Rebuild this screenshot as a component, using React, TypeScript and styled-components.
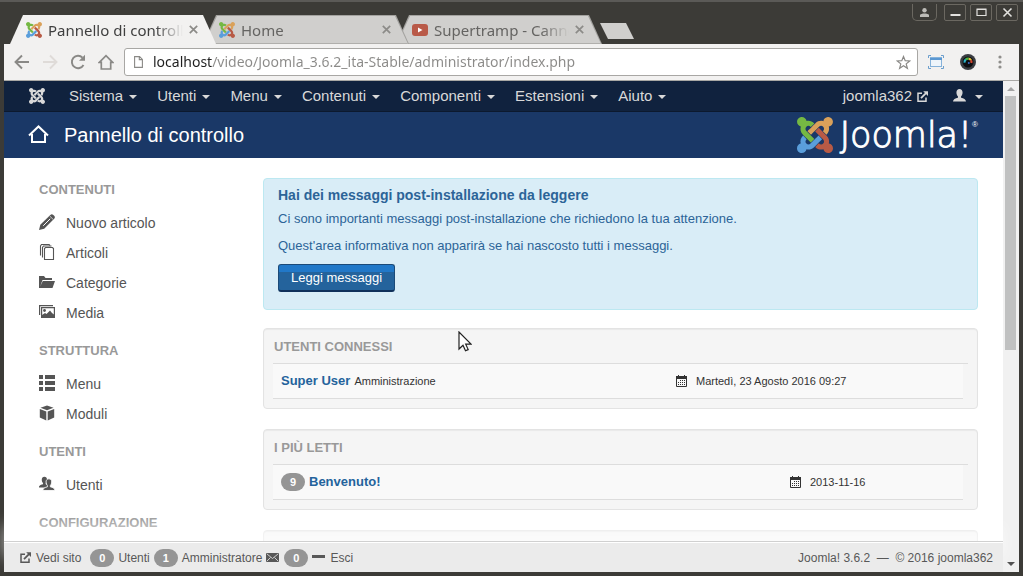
import React from "react";
import styled, { createGlobalStyle, css } from "styled-components";

const Global = createGlobalStyle`
  *, *::before, *::after { box-sizing: border-box; }
  body { margin: 0; background: #3c3b37; }
  button, input { font: inherit; margin: 0; padding: 0; border: 0; background: none; color: inherit; }
  a { color: inherit; text-decoration: none; }
  h1, h2, h3, h4, p, ul { margin: 0; padding: 0; }
  ul { list-style: none; }
  svg { display: block; flex: none; }
`;

/* ---------- browser window ---------- */

const Window = styled.div`
  position: relative;
  display: flex;
  flex-direction: column;
  height: 100vh;
  padding: 0 4px 4px;
  background: #3c3b37;
  border-top: 2px solid #5b5a57;
  overflow: hidden;
  font-family: "Liberation Sans", Arial, sans-serif;
`;

const TabStrip = styled.div`
  display: flex;
  justify-content: space-between;
  height: 42px;
  flex: none;
  padding-left: 6px;
`;

const Tabs = styled.div`
  display: flex;
  align-items: flex-end;
`;

const slope = "polygon(13px 0, calc(100% - 13px) 0, 100% 100%, 0 100%)";
const innerSlope =
  "polygon(14px 1px, calc(100% - 14px) 1px, calc(100% - 1px) 100%, 1px 100%)";

const Tab = styled.div<{ $active?: boolean; $level: number }>`
  position: relative;
  z-index: ${(p) => p.$level};
  display: flex;
  align-items: center;
  gap: 6px;
  width: 206px;
  height: 29px;
  margin-right: -13px;
  padding: 0 18px 0 16px;
  color: ${(p) => (p.$active ? "#3f3f3f" : "#656462")};
  isolation: isolate;
  &::before,
  &::after {
    content: "";
    position: absolute;
    inset: 0;
    z-index: -1;
  }
  &::before {
    clip-path: ${slope};
    background: ${(p) => (p.$active ? "#f2f1f0" : "#a3a29f")};
  }
  &::after {
    clip-path: ${innerSlope};
    background: ${(p) => (p.$active ? "#f2f1f0" : "#d0cfcd")};
    ${(p) => !p.$active && css`border-bottom: 1px solid #b0afac;`}
  }
`;

const TabTitle = styled.span`
  flex: 1;
  min-width: 0;
  overflow: hidden;
  white-space: nowrap;
  font: 15px/20px "Noto Sans", "Open Sans", sans-serif;
  mask-image: linear-gradient(90deg, #000 calc(100% - 28px), transparent);
`;

const IconButton = styled.button`
  display: flex;
  align-items: center;
  justify-content: center;
  flex: none;
`;

const NewTab = styled.button`
  width: 34px;
  height: 16px;
  margin: 0 0 5px 11px;
  background: #d0cfcd;
  clip-path: polygon(0 0, 26px 0, 100% 100%, 8px 100%);
`;

const WindowControls = styled.div`
  display: flex;
  align-items: flex-start;
  gap: 4px;
  padding: 2px 1px 0 0;
`;

const WindowButton = styled(IconButton)<{ $profile?: boolean }>`
  width: 22px;
  height: 17px;
  border: 1px solid #6b6861;
  border-radius: 2px;
  ${(p) =>
    p.$profile &&
    css`
      width: 25px;
      border-top: 0;
      border-radius: 0 0 5px 5px;
      margin-right: 3px;
    `}
`;

const Toolbar = styled.div`
  display: flex;
  align-items: center;
  gap: 12px;
  height: 37px;
  flex: none;
  padding: 0 11px 0 10px;
  background: #f2f1f0;
  border-bottom: 1px solid #a9a8a5;
`;

const ToolGroup = styled.div`
  display: flex;
  gap: 12px;
`;

const Omnibox = styled.label`
  display: flex;
  align-items: center;
  gap: 10px;
  flex: 1;
  height: 28px;
  margin: 0 -2px;
  padding: 0 6px 0 9px;
  background: #fff;
  border: 1px solid #a8a7a4;
  border-radius: 3px;
`;

const Address = styled.input`
  flex: 1;
  min-width: 0;
  outline: 0;
  font: 14px/20px "Noto Sans", "Open Sans", sans-serif;
  color: #8b8a88;
  background: linear-gradient(90deg, #1f1f1f 59px, #8b8a88 59px);
  background-clip: text;
  -webkit-background-clip: text;
  -webkit-text-fill-color: transparent;
`;

const Extensions = styled.div`
  display: flex;
  align-items: center;
  gap: 16px;
`;

const Viewport = styled.div`
  display: flex;
  flex: 1;
  min-height: 0;
  background: #fff;
`;

const Page = styled.div`
  display: flex;
  flex-direction: column;
  flex: 1;
  min-width: 0;
`;

const Scrollbar = styled.div`
  display: flex;
  flex-direction: column;
  align-items: center;
  width: 16px;
  padding: 6px 1px 6px 0;
  background: #f1f1f1;
`;

const ScrollTrack = styled.div`
  flex: 1;
  width: 11px;
  margin: 5px 0;
`;

const ScrollThumb = styled.div`
  height: 55%;
  background: #c0c1c1;
`;

/* ---------- Joomla page ---------- */

const NavBar = styled.nav`
  display: flex;
  align-items: center;
  height: 31px;
  flex: none;
  padding: 0 20px 0 25px;
  background: #10223e;
  border-bottom: 1px solid #0c192e;
  color: #d9d9d9;
  font-size: 15px;
  line-height: 20px;
`;

const Menus = styled.div`
  display: flex;
  gap: 20px;
  flex: 1;
  margin-left: 24px;
`;

const MenuButton = styled.button`
  display: flex;
  align-items: center;
  gap: 6px;
  &::after {
    content: "";
    margin-top: 2px;
    border: 4px solid transparent;
    border-top-color: #d9d9d9;
    border-bottom: 0;
  }
`;

const UserMenu = styled(MenuButton)`
  gap: 9px;
`;

const SiteLink = styled.a`
  display: flex;
  align-items: center;
  gap: 5px;
  margin-right: 25px;
`;

const Header = styled.header`
  display: flex;
  align-items: center;
  gap: 15px;
  height: 46px;
  flex: none;
  padding: 0 25px 0 24px;
  background: #1a3867;
  color: #fff;
`;

const PageTitle = styled.h1`
  flex: 1;
  font-size: 20px;
  line-height: 24px;
  font-weight: 400;
`;

const Brand = styled.div`
  display: flex;
  align-items: center;
  gap: 7px;
`;

const BrandName = styled.span`
  display: flex;
  align-items: flex-start;
  font: 200 35px/36px "DejaVu Sans", sans-serif;
  -webkit-text-stroke: 1px #fff;
`;

const Registered = styled.span`
  font: 8px/16px "Liberation Sans", sans-serif;
  -webkit-text-stroke: 0;
`;

const Content = styled.div`
  display: flex;
  flex: 1;
  min-height: 0;
  overflow: hidden;
  padding: 0 25px 0 35px;
`;

const Sidebar = styled.aside`
  width: 224px;
  flex: none;
  padding-top: 9px;
`;

const GroupTitle = styled.h2`
  padding: 13px 0 8px;
  color: #999;
  font-size: 13px;
  line-height: 20px;
  text-transform: uppercase;
`;

const SideLink = styled.a`
  display: flex;
  align-items: center;
  gap: 11px;
  height: 30px;
  color: #555;
  font-size: 14px;
`;

const Main = styled.main`
  flex: 1;
  min-width: 0;
  padding-top: 20px;
`;

const Alert = styled.section`
  height: 132px;
  margin-bottom: 18px;
  padding: 6px 14px;
  background: #d9edf7;
  border: 1px solid #bce8f1;
  border-radius: 4px;
  color: #2c6498;
  font-size: 13px;
`;

const AlertTitle = styled.h2`
  margin-bottom: 5px;
  font-size: 14px;
  line-height: 20px;
`;

const AlertText = styled.p`
  margin-bottom: 9px;
  line-height: 18px;
`;

const PrimaryButton = styled.button`
  height: 28px;
  padding: 0 12px;
  color: #fff;
  font-size: 13px;
  line-height: 24px;
  background: linear-gradient(#2178c8 7px, #24639c 7px);
  border: 1px solid #1b4a78;
  border-bottom: 2px solid #10305a;
  border-radius: 3px;
`;

const Card = styled.section`
  height: 81px;
  margin-bottom: 20px;
  padding: 8px 9px;
  background: #f5f5f5;
  border: 1px solid #e3e3e3;
  border-radius: 4px;
  box-shadow: inset 0 1px 1px rgba(0, 0, 0, 0.05);
`;

const CardTitle = styled.h2`
  padding: 0 1px 6px;
  color: #999;
  border-bottom: 1px solid #ddd;
  font-size: 13px;
  line-height: 20px;
  text-transform: uppercase;
`;

const Row = styled.div<{ $columns: string }>`
  display: grid;
  grid-template-columns: ${(p) => p.$columns};
  align-items: center;
  height: 35px;
  margin-right: 5px;
  padding: 0 8px;
  background: #f9f9f9;
  border-bottom: 1px solid #ddd;
  color: #333;
  font-size: 11px;
`;

const RowMain = styled.div`
  display: flex;
  align-items: baseline;
  gap: 4px;
`;

const RowLink = styled.a`
  color: #24639c;
  font-size: 13px;
  line-height: 18px;
  font-weight: 700;
`;

const RowDate = styled.div`
  display: flex;
  align-items: center;
  gap: 9px;
`;

const Badge = styled.span`
  min-width: 24px;
  height: 18px;
  padding: 0 8px;
  border-radius: 9px;
  background: #959595;
  color: #fff;
  font-size: 11px;
  line-height: 18px;
  font-weight: 700;
  text-align: center;
`;

const StatusBar = styled.footer`
  position: relative;
  display: flex;
  align-items: center;
  gap: 4px;
  height: 31px;
  flex: none;
  padding: 1px 10px 0 16px;
  background: #ebebeb;
  border-top: 1px solid #d0d0d0;
  box-shadow: inset 0 1px 0 #fff, 0 -15px 15px rgba(255, 255, 255, 0.6);
  color: #585858;
  font-size: 12px;
`;

const StatusLink = styled.a<{ $wide?: boolean }>`
  display: flex;
  align-items: center;
  gap: 5px;
  margin-right: ${(p) => (p.$wide ? "5px" : "0")};
`;

const Copyright = styled.p`
  margin-left: auto;
  white-space: pre;
`;

const Pointer = styled.svg`
  position: absolute;
  left: 458px;
  top: 329px;
`;

/* ---------- drawings ---------- */

const knot = [
  "M.6 92.1C.6 58.8 27.4 32 60.4 32c30 0 54.5 21.9 59.2 50.2 32.6-7.6 67.1.6 96.5 30l-44.3 44.3c-20.5-20.5-42.6-16.3-55.4-3.5-14.3 14.3-14.3 37.9 0 52.2l99.5 99.5-44 44.3c-87.7-87.2-49.7-49.7-99.8-99.7-26.8-26.5-35-64.8-24.8-98.9C20.4 144.6.6 120.7.6 92.1z",
  "M130.1 208.5l44.3 44.3c10-10 89.7-89.7 99.7-99.8 14.3-14.3 37.6-14.3 51.9 0 12.8 12.8 17 35-3.5 55.4l44 44.3c31.2-31.2 38.5-67.6 28.9-101.2 29.2-4.1 51.9-29.2 51.9-59.5 0-33.2-26.8-60.1-59.8-60.1-30.3 0-55.4 22.5-59.5 51.6-33.8-9.9-71.7-1.5-98.3 25.1-18.3 19.1-71.1 71.5-99.6 99.9z",
  "M396.4 360.7c8.2-32.7-.9-68.5-26.3-93.9-11.8-12.2 5 4.7-99.5-99.7l-44.3 44.3 99.7 99.7c14.3 14.3 14.3 37.6 0 51.9-12.8 12.8-35 17-55.4-3.5l-44 44.3c27.6 30.2 68 38.8 102.7 28 5.5 27.4 29.7 48.1 58.9 48.1 33 0 59.8-26.8 59.8-60.1 0-30.2-22.5-55-51.6-59.1z",
  "M312.1 307.6l-44-44.3c-87 86.4-50.4 50.4-99.7 99.8-14.3 14.3-37.6 14.3-51.9 0-13.1-13.4-16.9-35.3 3.2-55.4l-44-44.3c-30.2 30.2-38 65.2-29.5 98.3-26.7 6-46.2 29.9-46.2 58.2C0 453.2 26.8 480 59.8 480c28.6 0 52.5-19.8 58.6-46.7 32.7 8.2 68.5-.6 94.2-26 32.1-32 12.2-12.4 99.5-99.7z",
];

const JoomlaMark = ({ size, mono }: { size: number; mono?: boolean }) => {
  const colours = mono
    ? Array(4).fill("#d9d9d9")
    : ["#75b843", "#daa15a", "#b85a45", "#5a9edb"];
  return (
    <svg width={size} height={size} viewBox="0 32 448 448" aria-hidden="true">
      {knot.map((d, i) => (
        <path key={i} d={d} fill={colours[i]} />
      ))}
    </svg>
  );
};

const Cross = () => (
  <svg width="9" height="9" viewBox="0 0 9 9" stroke="#8c8b88" strokeWidth="1.7">
    <path d="M.8.8l7.4 7.4M8.2.8L.8 8.2" />
  </svg>
);

const VideoMark = () => (
  <svg width="16" height="16" viewBox="0 0 16 16">
    <rect y="2" width="16" height="12" rx="3" fill="#b95a48" />
    <path d="M6 5.5v5L10.500 8z" fill="#fff" />
  </svg>
);

const External = ({ size }: { size: number }) => (
  <svg width={size} height={size} viewBox="0 0 11 11" fill="none" stroke="currentColor" strokeWidth="1.5">
    <path d="M5 2.200H1v8h8V6.500" />
    <path d="M4 7.200l5-5" strokeWidth="1.700" />
    <path d="M6.200.2H11v4.700z" fill="currentColor" stroke="none" />
  </svg>
);

const person =
  "M8 1c2 0 3.300 1.400 3.300 3.600 0 1.800-.7 3.300-1.600 4.200v1.500c2.800.5 5.300 1.700 5.300 4.200H1c0-2.500 2.500-3.700 5.300-4.200V8.800C5.400 7.900 4.700 6.400 4.700 4.600 4.700 2.400 6 1 8 1z";

const Person = () => (
  <svg width="13" height="16" viewBox="1 0 14 17" fill="currentColor">
    <path d={person} />
  </svg>
);

const sideIcons: Record<string, React.ReactNode> = {
  pencil: (
    <>
      <path d="M0 16l1.300-5.200L11.300.9c1-.9 2-.9 3 0l.9.9c.9 1 .9 2 0 3L5.200 14.700z" />
      <path d="M4.200 11.800l7-7" stroke="#fff" strokeWidth="1" />
      <path d="M10.700 2l3.400 3.400" stroke="#fff" strokeWidth=".7" />
    </>
  ),
  copy: (
    <g fill="none" stroke="currentColor" strokeWidth="1.100">
      <path d="M6.500 3.500h7l1 1v11h-9v-11z" />
      <path d="M3.500 13.500v-10l1-1.500h8" />
      <path d="M1.500 11.500V2l1-1.500h7.500l1 1" />
    </g>
  ),
  folder: <path d="M0 14V2h5l1.500 2H13v2H3.500L1.200 12.500 3.800 7H16l-2.500 7z" />,
  media: (
    <>
      <path d="M.6 11V1.600H14M2.600 3.600h12.800v9.800H2.600z" fill="none" stroke="currentColor" strokeWidth="1.200" />
      <circle cx="5.500" cy="6.500" r="1.400" />
      <path d="M3 13v-2l3-2 1.500 1L11 6.500l2 2.500 2 1.500V13z" />
    </>
  ),
  list: <path d="M0 0h4v4H0zM6 0h10v4H6zM0 6h4v4H0zM6 6h10v4H6zM0 12h4v4H0zM6 12h10v4H6z" />,
  cube: (
    <>
      <path d="M8 .5l6.500 2.300L8 5.300 1.500 2.800z" />
      <path d="M.8 4l6.500 2.500v9L.8 12.500zM15.200 4L8.700 6.500v9l6.500-3z" />
    </>
  ),
  users: (
    <>
      <path d={person} transform="translate(-1 0) scale(.8)" />
      <path d={person} transform="translate(3 2) scale(.86)" stroke="#fff" strokeWidth="1" />
    </>
  ),
};

const SideIcon = ({ name }: { name: string }) => (
  <svg width="16" height="18" viewBox="0 0 16 18" fill="currentColor">
    {sideIcons[name]}
  </svg>
);

const Calendar = () => (
  <svg width="11" height="12" viewBox="0 0 11 12" fill="#333">
    <path d="M0 1h2V0h1v1h5V0h1v1h2v3H0z" />
    <path d="M.5 4v7.500h10V4" fill="none" stroke="#333" />
    <path d="M4 5h1v1H4zM6 5h1v1H6zM8 5h1v1H8zM2 7h1v1H2zM4 7h1v1H4zM6 7h1v1H6zM8 7h1v1H8zM2 9h1v1H2zM4 9h1v1H4zM6 9h1v1H6zM8 9h1v1H8z" />
  </svg>
);

const groups = [
  {
    title: "Contenuti",
    items: [
      ["pencil", "Nuovo articolo"],
      ["copy", "Articoli"],
      ["folder", "Categorie"],
      ["media", "Media"],
    ],
  },
  { title: "Struttura", items: [["list", "Menu"], ["cube", "Moduli"]] },
  { title: "Utenti", items: [["users", "Utenti"]] },
  { title: "Configurazione", items: [] },
];

const menus = ["Sistema", "Utenti", "Menu", "Contenuti", "Componenti", "Estensioni", "Aiuto"];

const tabs = [
  { title: "Pannello di controllo", icon: <JoomlaMark size={16} /> },
  { title: "Home", icon: <JoomlaMark size={16} /> },
  { title: "Supertramp - Cannonball", icon: <VideoMark /> },
];

export default function App() {
  return (
    <Window>
      <Global />
      <TabStrip>
        <Tabs>
          {tabs.map((tab, i) => (
            <Tab key={tab.title} $active={i === 0} $level={3 - i}>
              {tab.icon}
              <TabTitle>{tab.title}</TabTitle>
              <IconButton aria-label="Chiudi scheda">
                <Cross />
              </IconButton>
            </Tab>
          ))}
          <NewTab aria-label="Nuova scheda" />
        </Tabs>
        <WindowControls>
          <WindowButton $profile aria-label="Profilo">
            <svg width="9" height="9" viewBox="0 0 9 9" fill="#bdbcb8">
              <circle cx="4.500" cy="2.200" r="2.200" />
              <path d="M0 9V7c1-2 8-2 9 0v2z" />
            </svg>
          </WindowButton>
          <WindowButton aria-label="Riduci">
            <svg width="11" height="11" viewBox="0 0 11 11" fill="#e3e2df">
              <path d="M.5 7h10v2H.5z" />
            </svg>
          </WindowButton>
          <WindowButton aria-label="Ingrandisci">
            <svg width="11" height="11" viewBox="0 0 11 11" fill="none" stroke="#e3e2df">
              <path d="M1 2.500h9v6H1zM.5 2h10" strokeWidth="1.200" />
            </svg>
          </WindowButton>
          <WindowButton aria-label="Chiudi">
            <svg width="11" height="11" viewBox="0 0 11 11" stroke="#e3e2df" strokeWidth="1.600">
              <path d="M1.500 1.500l8 8M9.500 1.500l-8 8" />
            </svg>
          </WindowButton>
        </WindowControls>
      </TabStrip>

      <Toolbar>
        <ToolGroup>
          <IconButton aria-label="Indietro">
            <svg width="16" height="16" viewBox="0 0 16 16" fill="none" stroke="#8a8986" strokeWidth="1.900">
              <path d="M15 8H2M8 1.500L1.500 8 8 14.500" />
            </svg>
          </IconButton>
          <IconButton aria-label="Avanti" disabled>
            <svg width="16" height="16" viewBox="0 0 16 16" fill="none" stroke="#dfdbd8" strokeWidth="1.900">
              <path d="M1 8h13M8 1.500L14.500 8 8 14.500" />
            </svg>
          </IconButton>
          <IconButton aria-label="Ricarica">
            <svg width="16" height="16" viewBox="0 0 16 16" fill="none" stroke="#8a8986" strokeWidth="1.900">
              <path d="M13.500 11A6.200 6.200 0 1 1 12.500 3.600" />
              <path d="M15 .8v6H9z" fill="#8a8986" stroke="none" />
            </svg>
          </IconButton>
          <IconButton aria-label="Pagina iniziale">
            <svg width="16" height="16" viewBox="0 0 16 16" fill="none" stroke="#8a8986" strokeWidth="1.700">
              <path d="M3.300 8.300V15h9.400V8.300h2L8 1.600 1.300 8.300z" />
            </svg>
          </IconButton>
        </ToolGroup>
        <Omnibox>
          <svg width="9" height="12" viewBox="0 0 9 12" fill="none" stroke="#8a8986" strokeWidth="1.100">
            <path d="M.6.6h5l2.800 2.800v8H.6zM5.300.6v3h3" />
          </svg>
          <Address
            aria-label="Indirizzo"
            defaultValue="localhost/video/Joomla_3.6.2_ita-Stable/administrator/index.php"
          />
          <IconButton type="button" aria-label="Aggiungi ai preferiti">
            <svg width="15" height="15" viewBox="0 0 15 15" fill="none" stroke="#8a8986" strokeWidth="1.200">
              <path d="M7.500 1.500l1.700 4.200 4.500.3-3.500 2.900 1.200 4.400-3.900-2.500-3.900 2.500 1.200-4.400L1.300 6l4.500-.3z" />
            </svg>
          </IconButton>
        </Omnibox>
        <Extensions>
          <IconButton aria-label="Cattura schermo">
            <svg width="16" height="14" viewBox="0 0 16 14" fill="none">
              <rect x="2.500" y="2.500" width="11" height="9" fill="#eef5fb" stroke="#86b2da" />
              <path d="M2 3h12v2H2z" fill="#5b98d2" />
              <path d="M.5 3V.5H3M13 .5h2.500V3M15.500 11v2.500H13M3 13.500H.5V11" stroke="#6c9fcd" />
            </svg>
          </IconButton>
          <IconButton aria-label="Fotocamera">
            <svg width="16" height="16" viewBox="0 0 16 16">
              <circle cx="8" cy="8" r="8" fill="#3a3d42" />
              <circle cx="8" cy="8" r="5.500" fill="#0c0d10" />
              <g fill="none" strokeWidth="2.200">
                <path d="M4.600 8.600A3.500 3.500 0 0 1 5.800 5.300" stroke="#2bb3c9" />
                <path d="M5.800 5.300A3.500 3.500 0 0 1 8.600 4.600" stroke="#46b848" />
                <path d="M8.600 4.600A3.500 3.500 0 0 1 11 6.200" stroke="#e6c23c" />
                <path d="M11 6.200A3.500 3.500 0 0 1 11.300 9" stroke="#d0452f" />
              </g>
              <circle cx="8.800" cy="9" r="1" fill="#3d66c4" />
            </svg>
          </IconButton>
          <IconButton aria-label="Menu del browser">
            <svg width="16" height="14" viewBox="0 0 16 14" fill="#8f8e8b">
              <circle cx="8" cy="2" r="1.600" />
              <circle cx="8" cy="7" r="1.600" />
              <circle cx="8" cy="12" r="1.600" />
            </svg>
          </IconButton>
        </Extensions>
      </Toolbar>

      <Viewport>
        <Page>
          <NavBar>
            <a href="#home" aria-label="Joomla">
              <JoomlaMark size={16} mono />
            </a>
            <Menus>
              {menus.map((m) => (
                <MenuButton key={m}>{m}</MenuButton>
              ))}
            </Menus>
            <SiteLink href="#sito">
              joomla362 <External size={11} />
            </SiteLink>
            <UserMenu aria-label="Menu utente">
              <Person />
            </UserMenu>
          </NavBar>

          <Header>
            <svg width="21" height="22" viewBox="0 0 21 22" fill="none" stroke="#fff" strokeWidth="2">
              <path d="M1 11.500L10.500 2.500 20 11.500" />
              <path d="M4 10v8h13v-8" />
            </svg>
            <PageTitle>Pannello di controllo</PageTitle>
            <Brand>
              <JoomlaMark size={36} />
              <BrandName>
                Joomla!<Registered>®</Registered>
              </BrandName>
            </Brand>
          </Header>

          <Content>
            <Sidebar>
              {groups.map((g) => (
                <React.Fragment key={g.title}>
                  <GroupTitle>{g.title}</GroupTitle>
                  <ul>
                    {g.items.map(([icon, label]) => (
                      <li key={label}>
                        <SideLink href="#voce">
                          <SideIcon name={icon} />
                          {label}
                        </SideLink>
                      </li>
                    ))}
                  </ul>
                </React.Fragment>
              ))}
            </Sidebar>
            <Main>
              <Alert>
                <AlertTitle>Hai dei messaggi post-installazione da leggere</AlertTitle>
                <AlertText>
                  Ci sono importanti messaggi post-installazione che richiedono la tua attenzione.
                </AlertText>
                <AlertText>
                  Quest'area informativa non apparirà se hai nascosto tutti i messaggi.
                </AlertText>
                <PrimaryButton>Leggi messaggi</PrimaryButton>
              </Alert>
              <Card>
                <CardTitle>Utenti connessi</CardTitle>
                <Row $columns="395fr 279fr">
                  <RowMain>
                    <RowLink href="#utente">Super User</RowLink>
                    <span>Amministrazione</span>
                  </RowMain>
                  <RowDate>
                    <Calendar />
                    Martedì, 23 Agosto 2016 09:27
                  </RowDate>
                </Row>
              </Card>
              <Card>
                <CardTitle>I più letti</CardTitle>
                <Row $columns="509fr 165fr">
                  <RowMain>
                    <Badge>9</Badge>
                    <RowLink href="#articolo">Benvenuto!</RowLink>
                  </RowMain>
                  <RowDate>
                    <Calendar />
                    2013-11-16
                  </RowDate>
                </Row>
              </Card>
              <Card />
            </Main>
          </Content>

          <StatusBar>
            <StatusLink href="#sito" $wide>
              <External size={11} />
              Vedi sito
            </StatusLink>
            <Badge>0</Badge>
            <span>Utenti</span>
            <Badge>1</Badge>
            <span>Amministratore</span>
            <StatusLink href="#messaggi">
              <svg width="13" height="9" viewBox="0 0 13 9">
                <rect width="13" height="9" rx="1" fill="#585858" />
                <path d="M1 1l5.500 4.500L12 1M1 8l3.500-3.500M12 8L8.500 4.500" fill="none" stroke="#ebebeb" strokeWidth=".8" />
              </svg>
              <Badge>0</Badge>
            </StatusLink>
            <StatusLink href="#esci">
              <svg width="13" height="14" viewBox="0 0 13 14" fill="#585858">
                <path d="M0 4h13v3H0z" />
              </svg>
              Esci
            </StatusLink>
            <Copyright>{"Joomla! 3.6.2  —  © 2016 joomla362"}</Copyright>
          </StatusBar>
        </Page>
        <Scrollbar>
          <svg width="8" height="4" viewBox="0 0 8 4" fill="#a3a3a3">
            <path d="M0 4l4-4 4 4z" />
          </svg>
          <ScrollTrack>
            <ScrollThumb />
          </ScrollTrack>
          <svg width="8" height="4" viewBox="0 0 8 4" fill="#505050">
            <path d="M0 0h8L4 4z" />
          </svg>
        </Scrollbar>
      </Viewport>
      <Pointer width="14" height="22" viewBox="0 0 14 22">
        <path d="M1 1v17l4-3.800 2.500 5.600 2.700-1.200-2.500-5.400H13z" fill="#fff" stroke="#222" strokeWidth="1.200" />
      </Pointer>
    </Window>
  );
}
